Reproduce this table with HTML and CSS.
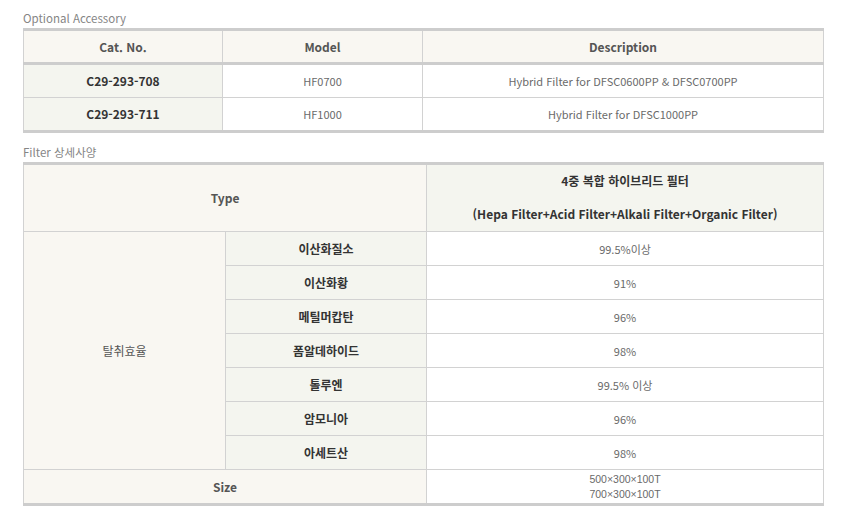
FILE: index.html
```html
<!DOCTYPE html>
<html lang="ko">
<head>
<meta charset="utf-8">
<link rel="stylesheet" href="styles.css">
</head>
<body>
<div class="page">
  <h3 class="caption">Optional Accessory</h3>
  <table class="spec acc">
    <colgroup><col class="c1"><col class="c2"><col class="c3"></colgroup>
    <thead>
      <tr><th>Cat. No.</th><th>Model</th><th>Description</th></tr>
    </thead>
    <tbody>
      <tr><td class="cat">C29-293-708</td><td>HF0700</td><td>Hybrid Filter for DFSC0600PP &amp; DFSC0700PP</td></tr>
      <tr><td class="cat">C29-293-711</td><td>HF1000</td><td>Hybrid Filter for DFSC1000PP</td></tr>
    </tbody>
  </table>

  <h3 class="caption second">Filter 상세사양</h3>
  <table class="spec filt">
    <colgroup><col class="d1"><col class="d2"><col class="d3"></colgroup>
    <tbody>
      <tr class="type-row">
        <th colspan="2">Type</th>
        <td class="sub type-val">4중 복합 하이브리드 필터<br><br>(Hepa Filter+Acid Filter+Alkali Filter+Organic Filter)</td>
      </tr>
      <tr>
        <td class="group" rowspan="7">탈취효율</td>
        <td class="sub">이산화질소</td><td>99.5%이상</td>
      </tr>
      <tr><td class="sub">이산화황</td><td>91%</td></tr>
      <tr><td class="sub">메틸머캅탄</td><td>96%</td></tr>
      <tr><td class="sub">폼알데하이드</td><td>98%</td></tr>
      <tr><td class="sub">톨루엔</td><td>99.5% 이상</td></tr>
      <tr><td class="sub">암모니아</td><td>96%</td></tr>
      <tr><td class="sub">아세트산</td><td>98%</td></tr>
      <tr class="size-row">
        <th colspan="2">Size</th>
        <td class="size-val">500×300×100T<br>700×300×100T</td>
      </tr>
    </tbody>
  </table>
</div>
</body>
</html>
```

FILE: styles.css
```css
html, body {
  margin: 0;
  padding: 0;
  background: #ffffff;
}
body {
  font-family: "Noto Sans CJK KR", "Noto Sans", sans-serif;
}
.page {
  padding: 10px 18px 0 23px;
  width: 800px;
}
.caption {
  margin: 0;
  font-size: 11.5px;
  font-weight: 400;
  color: #858585;
  line-height: 16px;
  height: 18px;
}
.caption.second {
  margin-top: 11px;
}
.spec {
  width: 800px;
  border-collapse: collapse;
  table-layout: fixed;
  border-top: 3px solid #cdcdcd;
  border-bottom: 3px solid #cdcdcd;
}
.spec th, .spec td {
  border: 1px solid #d2d2d2;
  text-align: center;
  padding: 0;
  font-size: 11px;
  line-height: 14px;
  color: #6a6a6a;
  font-weight: 400;
  height: 34px;
  box-sizing: border-box;
}
.spec tr:first-child > * { border-top: 3px solid #cdcdcd; }
.spec tr:last-child > * { border-bottom: 3px solid #cdcdcd; }
.acc .c1 { width: 199px; }
.acc .c2 { width: 200px; }
.acc .c3 { width: 401px; }
.acc th {
  background: #f9f7f2;
  font-weight: 700;
  font-size: 12px;
  color: #555;
}
.acc td.cat {
  background: #f4f5ef;
  font-weight: 700;
  font-size: 12px;
  color: #333;
}
.filt .d1 { width: 202px; }
.filt .d2 { width: 201px; }
.filt .d3 { width: 397px; }
.filt th {
  background: #f9f7f2;
  font-weight: 700;
  font-size: 12px;
  color: #555;
}
.filt td.group {
  background: #f9f7f2;
  font-size: 12px;
  color: #555;
}
.filt td.sub {
  background: #f4f5ef;
  font-weight: 700;
  font-size: 12px;
  color: #333;
}
.filt .type-row > * {
  height: 68px;
}
.filt td.type-val {
  line-height: 16.5px;
}
.filt .size-row > * {
  height: 35px;
}
.filt td.size-val {
  font-family: "Liberation Sans", "Noto Sans CJK KR", sans-serif;
  line-height: 14.5px;
  font-size: 10.5px;
}
```
